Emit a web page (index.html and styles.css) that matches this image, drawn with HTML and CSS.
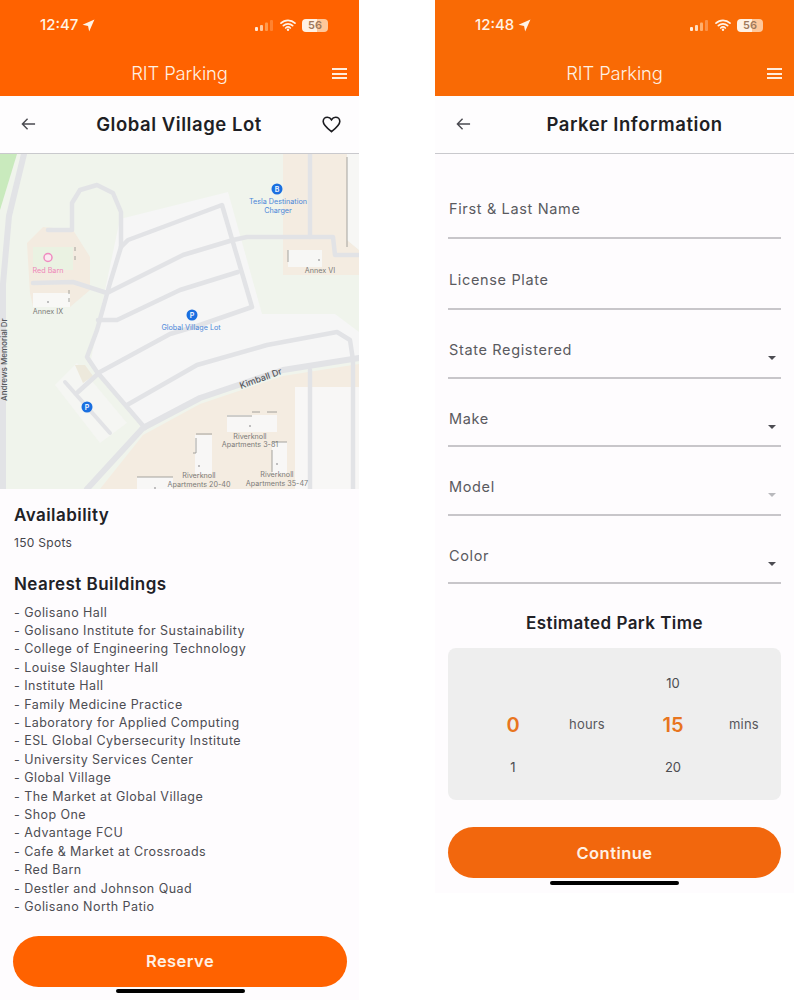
FILE: index.html
```html
<!DOCTYPE html>
<html lang="en">
<head>
<meta charset="utf-8">
<title>RIT Parking</title>
<link rel="stylesheet" href="styles.css">
</head>
<body>
<div class="page">
  <section class="phone phone-left">
    <header class="appbar appbar-left">
      <div class="status">
        <span class="clock">12:47</span>
        <svg class="loc" viewBox="0 0 12 12"><path d="M11.500 .5 L.5 5.400 L5.600 6.400 L6.600 11.500 Z"/></svg>
        <span class="status-right">
          <svg class="signal" viewBox="0 0 19 11"><rect x="0" y="7" width="3" height="4" rx="1" fill="#ffe9d8"/><rect x="5" y="5" width="3" height="6" rx="1" fill="#ffc79c"/><rect x="10" y="2.500" width="3" height="8.500" rx="1" fill="#ff9a4d"/><rect x="15" y="0" width="3" height="11" rx="1" fill="#ff8230"/></svg>
          <svg class="wifi" viewBox="0 0 16 12"><path d="M1 4.200a10 10 0 0 1 14 0M3.400 6.700a6.600 6.600 0 0 1 9.200 0M5.700 9a3.300 3.300 0 0 1 4.600 0" fill="none" stroke="#fff3e8" stroke-width="1.700" stroke-linecap="round"/><circle cx="8" cy="10.800" r="1.200" fill="#fff3e8"/></svg>
          <span class="battery"><span class="battery-num">56</span></span>
        </span>
      </div>
      <div class="titlebar">
        <span class="apptitle">RIT Parking</span>
        <span class="menu"><i></i><i></i><i></i></span>
      </div>
    </header>
    <div class="subbar">
      <svg class="back" viewBox="0 0 16 14"><path d="M15 7H1.500M7 1.500 1.500 7 7 12.500" fill="none" stroke="#4a4a50" stroke-width="1.500"/></svg>
      <h1 class="subtitle">Global Village Lot</h1>
      <svg class="heart" viewBox="0 0 20 18"><path d="M10 16.600C4 11.800 1.200 9.200 1.200 5.800 1.200 3.200 3.200 1.300 5.600 1.300c1.800 0 3.400 1 4.400 2.700 1-1.700 2.600-2.700 4.400-2.700 2.400 0 4.400 1.900 4.400 4.500 0 3.400-2.800 6-8.800 10.800Z" fill="none" stroke="#1c1c20" stroke-width="1.700"/></svg>
    </div>
    <svg class="map" viewBox="0 0 359 335" role="img" aria-label="Map of Global Village Lot">
      <g class="map-art">
        <rect width="359" height="335" fill="#f0f4ec"/>
        <path d="M0 0H17L0 56Z" fill="#c9eabd"/>
        <path d="M283 0H347V86L359 96V121H283Z" fill="#f4ecE1"/>
        <path d="M347 0H359V96L347 86Z" fill="#f7f7f5"/>
        <path d="M288 96H322V113H288Z" fill="#f7f7f5"/>
        <path d="M27 89 43 73 73 76 90 103V136L70 153H33L30 139Z" fill="#f3ebe0"/>
        <path d="M33 93H73V116H33Z" fill="#eaf2e2"/>
        <path d="M33 139H70V153H33Z" fill="#f8f8f6"/>
        <path d="M120 65 228 38 262 160 335 160 359 178V204L283 216 200 244 145 274 90 210 100 160Z" fill="#f6f6f6"/>
        <path d="M55 231 77 209 127 269 100 289Z" fill="#f5f6f3"/>
        <path d="M75 211H85L93 222 83 229Z" fill="#ede9dc"/>
        <path d="M100 335 143 281 200 250 283 222 359 210V335Z" fill="#f4ecE1"/>
        <path d="M295 233H359V335H295Z" fill="#f8f7f6"/>
        <path d="M227 261H277V278H227Z" fill="#f8f7f6"/>
        <path d="M195 281H212V320H195Z" fill="#f8f7f6"/>
        <path d="M272 288H287V320H272Z" fill="#f8f7f6"/>
        <path d="M137 323H173V335H137Z" fill="#f8f7f6"/>
        <g class="roads">
          <path class="road-main" d="M24 0 9 62 3 130V335"/>
          <path d="M48 76H72V49L80 36 97 31 113 39 121 58V93L110 129 97 176 87 203 97 218 145 274"/>
          <path d="M121 93 128 86 222 51 252 153 197 172 170 180 100 218 78 238"/>
          <path d="M33 129 73 128 107 139"/>
          <path d="M107 139 183 101 233 86 247 83H333L335 101H359"/>
          <path d="M98 166H117L180 136 238 118"/>
          <path d="M310 0V83"/>
          <path d="M127 251 197 211 267 191 337 178 350 186 353 206V335"/>
          <path class="road-main" d="M87 335 143 274 200 244 283 216 359 204"/>
          <path d="M310 216V335"/>
          <path class="road-thin" d="M65 228 110 279"/>
        </g>
        <path class="walls" d="M347 3V93M288 96V108M75 93V97M75 102V106M69 136V140M69 144V148M227 262H252M252 258H260M267 258H277M196 280H212M196 284V299H193M137 323H173M272 288H287M272 296V318"/>
        <g class="dots">
          <circle cx="48" cy="148" r=".8"/><circle cx="319" cy="106" r=".8"/><circle cx="250" cy="272" r=".8"/><circle cx="199" cy="312" r=".8"/><circle cx="277" cy="310" r=".8"/><circle cx="155" cy="334" r=".8"/>
        </g>
      </g>
      <circle cx="277" cy="35" r="5.500" fill="#1a6fe0"/><text x="277" y="37.500" class="pin">B</text>
      <circle cx="192" cy="161" r="5.500" fill="#1a6fe0"/><text x="192" y="163.800" class="pin">P</text>
      <circle cx="87" cy="253" r="5.500" fill="#1a6fe0"/><text x="87" y="255.800" class="pin">P</text>
      <circle cx="48" cy="103.500" r="4" fill="#fbe9f0" stroke="#ef8cc0" stroke-width="1.500"/>
      <text x="278" y="49.500" class="lbl blue">Tesla Destination</text>
      <text x="278" y="58.500" class="lbl blue">Charger</text>
      <text x="191" y="175.500" class="lbl blue">Global Village Lot</text>
      <text x="48" y="118.500" class="lbl pink">Red Barn</text>
      <text x="48" y="160" class="lbl grey">Annex IX</text>
      <text x="320" y="118.500" class="lbl grey">Annex VI</text>
      <text x="250" y="284.500" class="lbl grey">Riverknoll</text>
      <text x="250" y="293" class="lbl grey">Apartments 3-81</text>
      <text x="199" y="323.500" class="lbl grey">Riverknoll</text>
      <text x="199" y="332.500" class="lbl grey">Apartments 20-40</text>
      <text x="277" y="322.500" class="lbl grey">Riverknoll</text>
      <text x="277" y="331.500" class="lbl grey">Apartments 35-47</text>
      <text x="241" y="235" class="road" transform="rotate(-20 241 235)">Kimball Dr</text>
      <text x="6.500" y="247" class="road-sm" transform="rotate(-90 6.500 247)">Andrews Memorial Dr</text>
    </svg>
    <div class="details">
      <h2 class="section-title">Availability</h2>
      <p class="spots">150 Spots</p>
      <h2 class="section-title nearest">Nearest Buildings</h2>
      <ul class="buildings">
        <li>- Golisano Hall</li>
        <li>- Golisano Institute for Sustainability</li>
        <li>- College of Engineering Technology</li>
        <li>- Louise Slaughter Hall</li>
        <li>- Institute Hall</li>
        <li>- Family Medicine Practice</li>
        <li>- Laboratory for Applied Computing</li>
        <li>- ESL Global Cybersecurity Institute</li>
        <li>- University Services Center</li>
        <li>- Global Village</li>
        <li>- The Market at Global Village</li>
        <li>- Shop One</li>
        <li>- Advantage FCU</li>
        <li>- Cafe &amp; Market at Crossroads</li>
        <li>- Red Barn</li>
        <li>- Destler and Johnson Quad</li>
        <li>- Golisano North Patio</li>
      </ul>
      <button class="cta cta-left">Reserve</button>
      <div class="home"></div>
    </div>
  </section>

  <section class="phone phone-right">
    <header class="appbar appbar-right">
      <div class="status">
        <span class="clock">12:48</span>
        <svg class="loc" viewBox="0 0 12 12"><path d="M11.500 .5 L.5 5.400 L5.600 6.400 L6.600 11.500 Z"/></svg>
        <span class="status-right">
          <svg class="signal" viewBox="0 0 19 11"><rect x="0" y="7" width="3" height="4" rx="1" fill="#ffeedd"/><rect x="5" y="5" width="3" height="6" rx="1" fill="#ffdcbc"/><rect x="10" y="2.500" width="3" height="8.500" rx="1" fill="#ffaf6e"/><rect x="15" y="0" width="3" height="11" rx="1" fill="#fb9248"/></svg>
          <svg class="wifi" viewBox="0 0 16 12"><path d="M1 4.200a10 10 0 0 1 14 0M3.400 6.700a6.600 6.600 0 0 1 9.200 0M5.700 9a3.300 3.300 0 0 1 4.600 0" fill="none" stroke="#fff3e8" stroke-width="1.700" stroke-linecap="round"/><circle cx="8" cy="10.800" r="1.200" fill="#fff3e8"/></svg>
          <span class="battery"><span class="battery-num">56</span></span>
        </span>
      </div>
      <div class="titlebar">
        <span class="apptitle">RIT Parking</span>
        <span class="menu"><i></i><i></i><i></i></span>
      </div>
    </header>
    <div class="subbar subbar-plain">
      <svg class="back" viewBox="0 0 16 14"><path d="M15 7H1.500M7 1.500 1.500 7 7 12.500" fill="none" stroke="#4a4a50" stroke-width="1.500"/></svg>
      <h1 class="subtitle subtitle-shifted">Parker Information</h1>
      <span class="heart"></span>
    </div>
    <div class="form">
      <div class="field field-first"><span class="label">First &amp; Last Name</span></div>
      <div class="field field-text"><span class="label">License Plate</span></div>
      <div class="field field-select"><span class="label">State Registered</span><span class="caret"></span></div>
      <div class="field field-select"><span class="label">Make</span><span class="caret"></span></div>
      <div class="field field-select"><span class="label">Model</span><span class="caret caret-muted"></span></div>
      <div class="field field-select"><span class="label">Color</span><span class="caret"></span></div>
      <h2 class="section-title park-title">Estimated Park Time</h2>
      <div class="picker">
        <div class="wheel wheel-hours"><span></span><b>0</b><span>1</span></div>
        <span class="unit">hours</span>
        <div class="wheel wheel-mins"><span>10</span><b>15</b><span>20</span></div>
        <span class="unit">mins</span>
      </div>
      <button class="cta cta-right">Continue</button>
      <div class="home home-right"></div>
    </div>
  </section>
</div>
</body>
</html>
```
FILE: styles.css
```css
* { box-sizing: border-box; margin: 0; padding: 0; }
html, body { background: #fff; }
body { font-family: Inter, "Liberation Sans", sans-serif; overflow: hidden; }
.page { display: flex; gap: 76px; width: 794px; height: 1000px; align-items: flex-start; }
.phone { width: 359px; flex: none; background: #fefcfe; display: flex; flex-direction: column; }
.phone-left { height: 1000px; }
.phone-right { height: 893px; }
.appbar { height: 96px; color: #fff1e4; padding: 0 12px; display: flex; flex-direction: column; }
.appbar-left { background: #ff6200; }
.appbar-right { background: #f96a05; }
.status { height: 50px; padding-left: 28px; display: flex; align-items: center; }
.clock { font-size: 15px; font-weight: 500; line-height: 18px; color: #fff3e6; }
.loc { width: 13px; height: 13px; margin-left: 4px; fill: #fff3e6; }
.status-right { margin-left: auto; margin-right: 19px; display: flex; align-items: center; gap: 6px; }
.signal { width: 19px; height: 11px; }
.wifi { width: 16px; height: 12px; }
.battery { width: 26px; height: 13px; border-radius: 4px; background: linear-gradient(90deg, #fff1e4 56%, #ffc79a 56%); display: flex; align-items: center; justify-content: center; }
.battery-num { font-size: 11px; font-weight: 600; line-height: 12px; color: #a0785a; }
.titlebar { height: 46px; display: flex; align-items: center; position: relative; justify-content: center; }
.apptitle { font-size: 18.400px; font-weight: 350; line-height: 24px; letter-spacing: -.1px; color: #fff1e4; }
.menu { position: absolute; right: 0; top: 18px; width: 15px; display: flex; flex-direction: column; gap: 2.500px; }
.menu i { display: block; height: 2px; background: #ffeddd; }
.subbar { height: 58px; padding: 0 18px 1px 21px; display: flex; align-items: center; justify-content: space-between; background: #fefdfe; border-bottom: 1.500px solid #c9c9cd; }
.back { width: 15px; height: 14px; flex: none; }
.subtitle { font-size: 18.500px; font-weight: 600; line-height: 24px; letter-spacing: .55px; color: #1f1f24; }
.subtitle-shifted { margin-left: 41px; }
.heart { width: 19px; height: 17px; flex: none; }
.map { display: block; width: 359px; height: 335px; flex: none; }
.map-art { filter: blur(.5px); }
.roads { fill: none; stroke: #e2e3e6; stroke-width: 4.500; stroke-linejoin: round; stroke-linecap: round; }
.road-main { stroke-width: 6; }
.road-thin { stroke-width: 4; }
.walls { fill: none; stroke: #8f8f8c; stroke-width: .8; }
.dots { fill: #77777a; }
.pin { font: 700 7px Inter, sans-serif; fill: #e8f1ff; text-anchor: middle; }
.lbl { font: 400 7.200px Inter, sans-serif; text-anchor: middle; }
.blue { fill: #4a86d8; }
.pink { fill: #ee86b8; }
.grey { fill: #7b7b78; }
.road { font: 500 9px Inter, sans-serif; fill: #55585c; }
.road-sm { font: 500 8px Inter, sans-serif; fill: #55585c; }
.details { padding: 16px 13px 0 14px; flex: 1; display: flex; flex-direction: column; }
.section-title { font-size: 17px; font-weight: 600; line-height: 20px; letter-spacing: .45px; color: #212126; }
.spots { margin-top: 9px; font-size: 12px; line-height: 18px; letter-spacing: .3px; color: #45454b; }
.nearest { margin-top: 22px; }
.buildings { list-style: none; margin-top: 9.500px; }
.buildings li { font-size: 12.500px; line-height: 18.400px; letter-spacing: .45px; color: #4d4d53; }
.cta { border: 0; border-radius: 26px; height: 51px; color: #fff1e4; font: 600 16.500px/20px Inter, sans-serif; letter-spacing: .45px; flex: none; }
.cta-left { margin: 19.500px 0 0 -1px; width: 334px; background: #ff6200; }
.cta-right { margin-top: 27px; width: 333px; background: #f2670d; }
.home { width: 129px; height: 4px; border-radius: 2px; background: #000; align-self: center; margin-top: 2px; flex: none; }
.home-right { margin-top: 3px; }
.form { padding: 0 13px; flex: 1; display: flex; flex-direction: column; }
.field { position: relative; border-bottom: 2px solid #c8c6ca; padding-left: 1px; }
.field-first { height: 85px; padding-top: 45px; }
.field-text { height: 71px; padding-top: 31px; }
.field-select { height: 68.500px; padding-top: 30px; }
.label { display: block; font-size: 14.500px; line-height: 20px; letter-spacing: .65px; color: #5a5a60; }
.caret { position: absolute; right: 5px; top: 46px; border: 4px solid transparent; border-top: 4.500px solid #4c4c52; border-bottom: 0; }
.caret-muted { border-top-color: #b9b9bd; }
.park-title { text-align: center; margin-top: 29px; }
.picker { margin-top: 15px; height: 152px; background: #eeeeee; border-radius: 8px; display: grid; grid-template-columns: 121px 36px 124px 29px; }
.wheel { display: grid; grid-template-rows: 42px 42px 42px; padding-top: 14px; justify-items: center; align-items: center; font-size: 13px; color: #4c4c50; height: 152px; }
.wheel-hours { padding-left: 9px; }
.wheel-mins { padding-left: 12px; }
.wheel b { font-size: 20px; font-weight: 600; color: #e8751e; }
.unit { align-self: center; font-size: 13px; line-height: 18px; letter-spacing: .2px; color: #57575c; white-space: nowrap; }
```
